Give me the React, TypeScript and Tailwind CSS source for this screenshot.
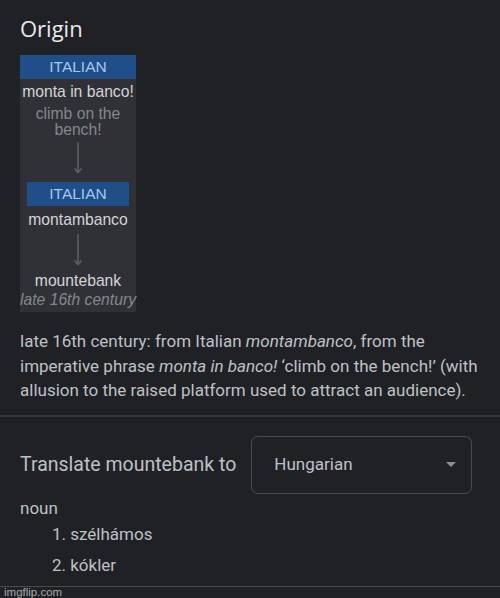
const Arrow = () => (
  <div className="flex justify-center">
    <svg width="10" height="32" viewBox="0 0 10 32">
      <line x1="5" y1="0" x2="5" y2="30" stroke="#5f6166" strokeWidth="1.5" />
      <path d="M1.5 26.5 L5 30.5 L8.5 26.5" fill="none" stroke="#5f6166" strokeWidth="1.5" />
    </svg>
  </div>
);

const Lang = ({ wide }: { wide?: boolean }) => (
  <div
    className={`flex h-[24px] items-center justify-center bg-[#1f4e89] text-[15.5px] text-[#a9c7ef] ${
      wide ? "" : "mx-[7px]"
    }`}
  >
    ITALIAN
  </div>
);

const App = () => {
  return (
    <div className="relative h-[598px] w-[500px] overflow-hidden bg-[#202124] font-['Roboto',sans-serif]">
      <div className="px-[20px] pt-[14px]">
        <h2 className="font-['Open_Sans',sans-serif] text-[22px] font-medium leading-[28px] text-[#e8eaed]">
          Origin
        </h2>

        <div className="mt-[13px] flex w-[116px] flex-col bg-[#303136] pb-[4px] text-center font-['Liberation_Sans',sans-serif] leading-[16px]">
          <Lang wide />
          <div className="mt-[4px] whitespace-nowrap text-[15.7px] leading-[17px] text-[#d4d5d8]">
            monta in banco!
          </div>
          <div className="mt-[6px] text-[15.7px] leading-[16px] text-[#85878d]">
            climb on the
            <br />
            bench!
          </div>
          <div className="mt-[4px]">
            <Arrow />
          </div>
          <div className="mt-[8px]">
            <Lang />
          </div>
          <div className="mt-[5px] text-[15.7px] leading-[17px] text-[#d4d5d8]">montambanco</div>
          <div className="mt-[6px]">
            <Arrow />
          </div>
          <div className="mt-[6px] text-[15.7px] leading-[17px] text-[#d4d5d8]">mountebank</div>
          <div className="-mx-[3px] mt-[2px] whitespace-nowrap text-[15.7px] italic leading-[17px] text-[#85878d]">
            late 16th century
          </div>
        </div>

        <p className="mt-[17px] w-[466px] text-[17px] leading-[24.5px] text-[#bdc1c6]">
          late 16th century: from Italian <i>montambanco</i>, from the imperative phrase{" "}
          <i>monta in banco!</i> ‘climb on the bench!’ (with allusion to the raised platform used to
          attract an audience).
        </p>
      </div>

      <div className="mt-[12px] h-[2px] w-full bg-[#36373b]" />

      <div className="px-[20px]">
        <div className="mt-[19px] flex items-center">
          <span className="text-[19.5px] text-[#bdc1c6]">Translate mountebank to</span>
          <div className="ml-[15px] flex h-[58px] w-[221px] items-center justify-between rounded-[7px] border border-[#4a4c50] pl-[22px] pr-[15px]">
            <span className="text-[17px] text-[#bdc1c6]">Hungarian</span>
            <svg width="10" height="6" viewBox="0 0 10 6">
              <path d="M0 0 L10 0 L5 5 Z" fill="#8d9096" />
            </svg>
          </div>
        </div>

        <div className="mt-[2px] text-[17px] leading-[24px] text-[#bdc1c6]">noun</div>
        <ol className="pl-[32px] text-[17px] text-[#bdc1c6]">
          <li className="mt-[2px] leading-[24px]">1. szélhámos</li>
          <li className="mt-[7px] leading-[24px]">2. kókler</li>
        </ol>
      </div>

      <div className="absolute left-0 right-0 top-[586px] h-[1px] bg-[#4a4b4f]" />
      <div className="absolute left-[4px] top-[584px] font-['Liberation_Sans',sans-serif] text-[11.5px] text-[#a8a8a8]">
        imgflip.com
      </div>
    </div>
  );
};

export default App;
